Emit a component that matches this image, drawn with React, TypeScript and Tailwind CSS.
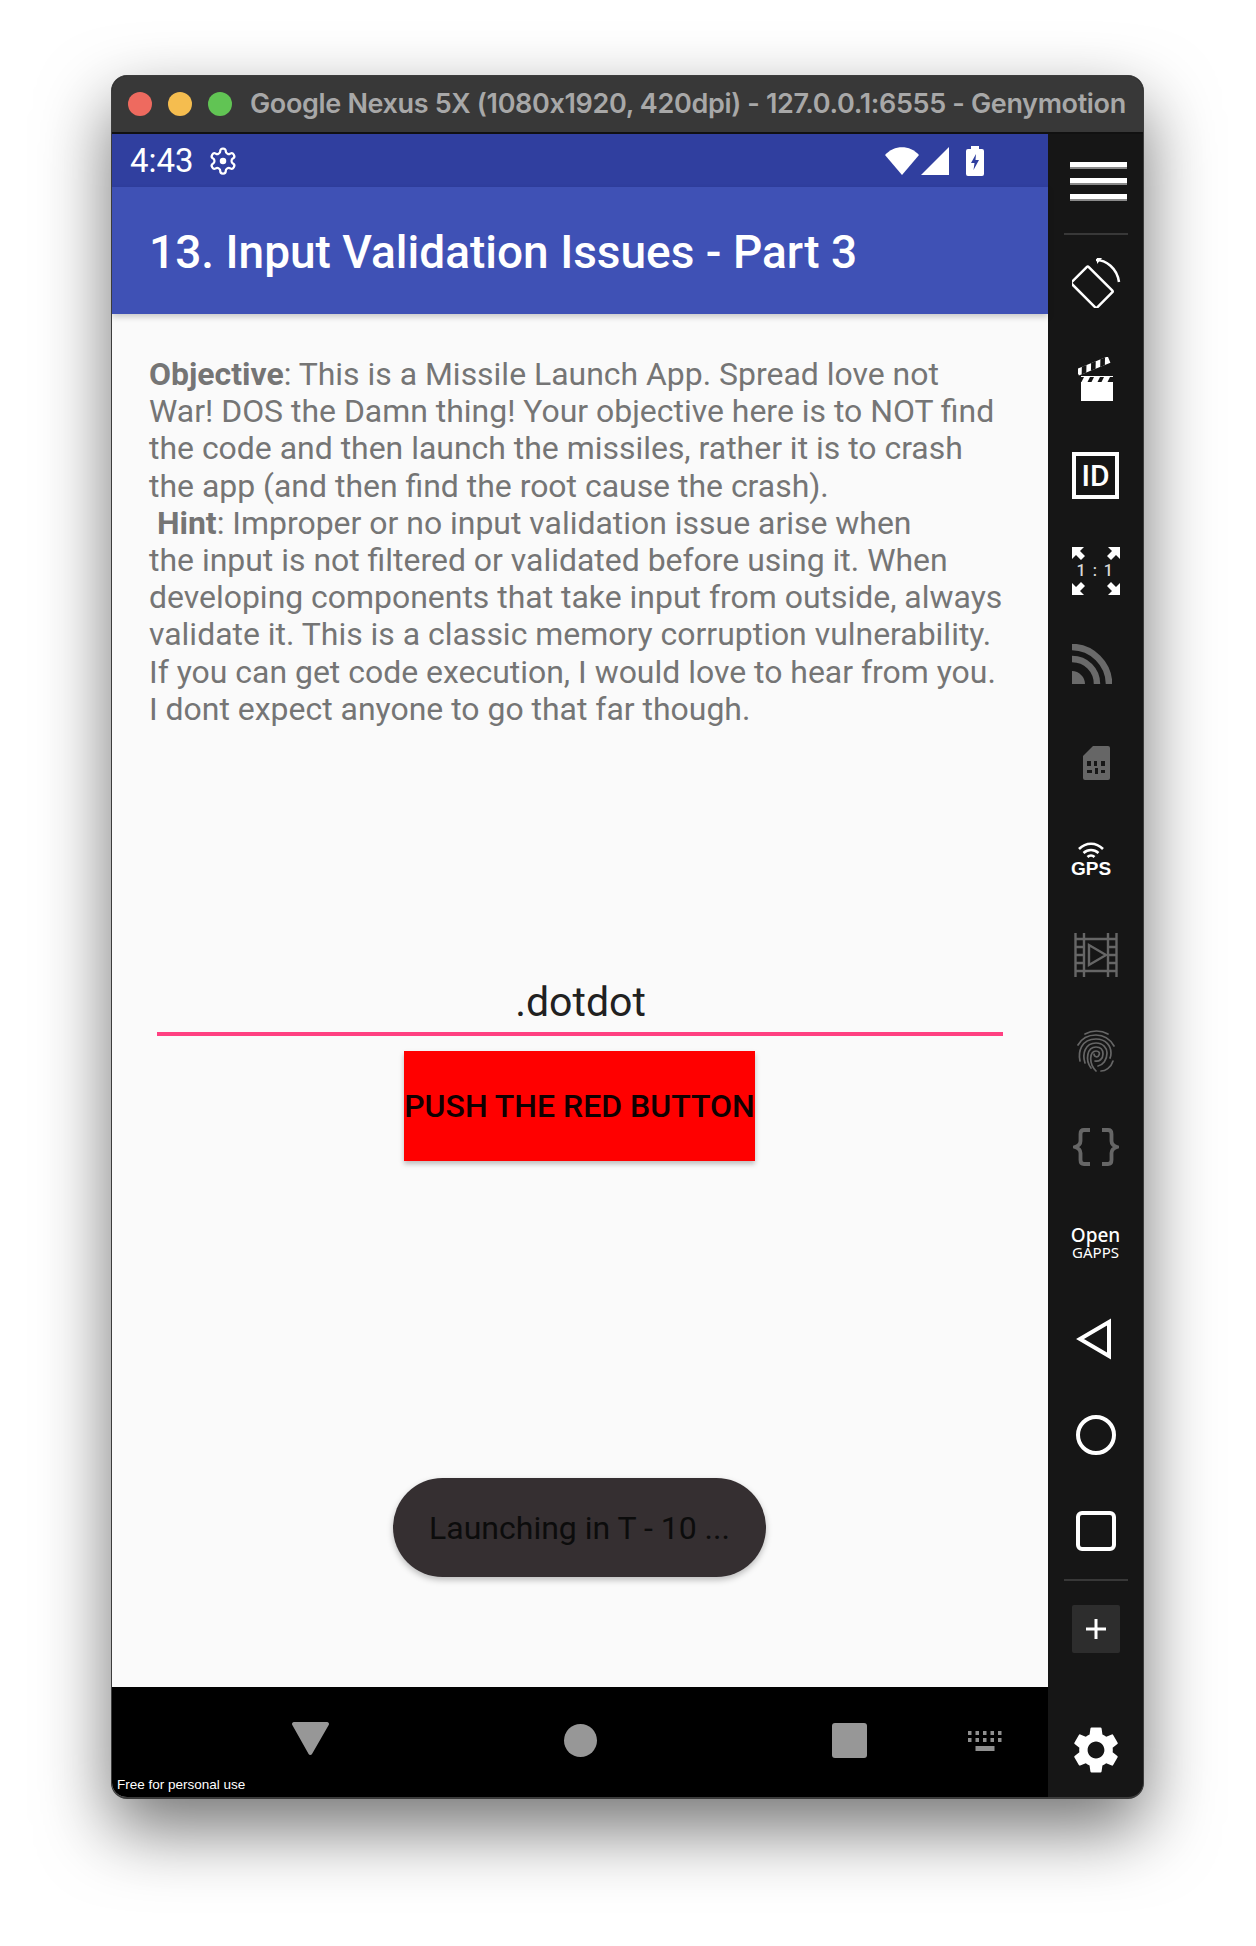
import React from "react";
import { MdSettings } from "react-icons/md";

const roboto = "font-['Roboto',sans-serif]";

function Slot({ children }: { children: React.ReactNode }) {
  return <div className="h-[96px] flex items-center justify-center shrink-0">{children}</div>;
}

function Rotate() {
  return (
    <svg width="50" height="50" viewBox="0 0 50 50" fill="none" stroke="#fff" strokeWidth="2.5" className="ml-[2px]">
      <rect x="8" y="14" width="24" height="36" rx="1.5" transform="rotate(-45 20 32) translate(2 -2)" />
      <path d="M24 2 C34 2 45 10 47 24" />
      <path d="M25 0 L30 -0 L25 6 Z" fill="#fff" stroke="none" />
    </svg>
  );
}

function Clapper() {
  return (
    <svg width="36" height="44" viewBox="0 0 36 44">
      <path d="M3 19h32v25H3z" fill="#fff" />
      <path d="M3 20h32v5H3z" fill="#161616" />
      <path d="M6 20h6l-2.5 5H3.5zM16 20h6l-2.5 5h-6zM26 20h6l-2.5 5h-6z" fill="#fff" />
      <g transform="rotate(-22 2 16)">
        <rect x="0" y="11" width="34" height="7" fill="#fff" />
        <path d="M6 11h5l-3 7H3zM16 11h5l-3 7h-5zM26 11h5l-3 7h-5z" fill="#161616" />
      </g>
    </svg>
  );
}

function IdIcon() {
  return (
    <div className={`w-[47px] h-[47px] border-[4px] border-white flex items-center justify-center text-white text-[30px] font-medium ${roboto}`}>
      ID
    </div>
  );
}

function OneToOne() {
  const arrow = "M0 0h12l-4 4 5 5-4 4-5-5-4 4z";
  return (
    <div className="relative w-[48px] h-[48px]">
      <svg width="48" height="48" viewBox="0 0 48 48" fill="#fff">
        <path d={arrow} />
        <path d={arrow} transform="translate(48 0) scale(-1 1)" />
        <path d={arrow} transform="translate(0 48) scale(1 -1)" />
        <path d={arrow} transform="translate(48 48) scale(-1 -1)" />
      </svg>
      <span className={`absolute inset-0 flex items-center justify-center text-[#d8d8d8] text-[16px] font-medium ${roboto} tracking-[1.5px] whitespace-pre`}>1 : 1</span>
    </div>
  );
}

function Rss() {
  return (
    <svg width="40" height="40" viewBox="0 0 40 40" fill="none" stroke="#6a6a6a" strokeWidth="6.5" className="mr-[8px] -mt-[6px]">
      <path d="M0 3C20 3 37 20 37 40" />
      <path d="M0 15C14 15 25 26 25 40" />
      <path d="M0 40V27C7 27 13 33 13 40Z" fill="#6a6a6a" stroke="none" />
    </svg>
  );
}

function Sim() {
  return (
    <svg width="27" height="34" viewBox="0 0 27 34" className="ml-[1px]">
      <path d="M10 0h15a2 2 0 0 1 2 2v30a2 2 0 0 1-2 2H2a2 2 0 0 1-2-2V10z" fill="#666" />
      <path d="M4 15h4v5H4zM11 15h3v5h-3zM18 15h4v5h-4zM4 24h5v3H4zM12 22h3v6h-3zM18 24h4v3h-4z" fill="#161616" />
    </svg>
  );
}

function Gps() {
  return (
    <div className="flex flex-col items-center mr-[9px]">
      <svg width="28" height="17" viewBox="0 0 28 17" fill="none" stroke="#fff" strokeWidth="2.6">
        <path d="M2 7C9 0 19 0 26 7" />
        <path d="M6.5 11C11 7 17 7 21.5 11" />
        <path d="M10.5 15C12.5 13 15.5 13 17.5 15" />
      </svg>
      <span className="text-white text-[19px] leading-[17px] font-bold font-['Liberation_Sans',sans-serif] mt-[1px]">GPS</span>
    </div>
  );
}

function Video() {
  return (
    <svg width="44" height="44" viewBox="0 0 44 44" fill="none" stroke="#666" strokeWidth="2.4">
      <path d="M1.5 0v44M10 0v44M34 0v44M42.5 0v44M1.5 6H42.5M1.5 38H42.5" />
      <path d="M1.5 14h8.5M1.5 22h8.5M1.5 30h8.5M34 14h8.5M34 22h8.5M34 30h8.5" />
      <path d="M15 12v20l17-10z" />
    </svg>
  );
}

function Finger() {
  return (
    <svg width="38" height="42" viewBox="0 0 38 42" fill="none" stroke="#666" strokeWidth="1.7" strokeLinecap="round">
      <path d="M8 4C15 0 24 0 31 4" />
      <path d="M1 15C6 6 13 5 19 5C26 5 33 9 37 16" />
      <path d="M3 31C1 22 4 9 19 9C29 9 34 16 34 23C34 25 33.5 27 33 28" />
      <path d="M8 33C5 24 8 13 19 13C26 13 30 18 30 23C30 30 26 35 21 36" />
      <path d="M14 38C8 30 10 17 19 17C24 17 26 20 26 24C26 29 22 32 18 31" />
      <path d="M19 41C11 33 13 21 19 21C22 21 23 23 22 25C21 28 17 27 17 24" />
      <path d="M24 41C28 41 34 38 36 31" />
    </svg>
  );
}

function Braces() {
  return (
    <svg width="46" height="38" viewBox="0 0 46 38" fill="none" stroke="#666" strokeWidth="3.8">
      <path d="M17 2H11C8.5 2 7.5 3.5 7.5 6V13C7.5 16 5 18 2 19C5 20 7.5 22 7.5 25V32C7.5 34.5 8.5 36 11 36H17" />
      <path d="M29 2H35C37.5 2 38.5 3.5 38.5 6V13C38.5 16 41 18 44 19C41 20 38.5 22 38.5 25V32C38.5 34.5 37.5 36 35 36H29" />
    </svg>
  );
}

function OpenGapps() {
  return (
    <div className="flex flex-col items-center text-white font-['Noto_Sans',sans-serif]">
      <span className="text-[19px] font-medium leading-[19px]">Open</span>
      <span className="text-[15px] leading-[15px]">GAPPS</span>
    </div>
  );
}

function Back() {
  return (
    <svg width="36" height="42" viewBox="0 0 36 42" fill="none" stroke="#fff" strokeWidth="4" className="-ml-[3px]">
      <path d="M33 4V38L4 21Z" />
    </svg>
  );
}

function Keyboard() {
  return (
    <svg width="36" height="20" viewBox="0 0 36 20" fill="#8f8f8f">
      {[0, 7.5, 15, 22.5, 30].map((x) => (
        <React.Fragment key={x}>
          <rect x={x} y="0" width="3.5" height="4" />
          <rect x={x} y="7" width="3.5" height="4" />
        </React.Fragment>
      ))}
      <rect x="7.5" y="15" width="19" height="5" />
    </svg>
  );
}

export default function App() {
  return (
    <div className="w-[1256px] h-[1946px] bg-white pt-[75px] pl-[111px] overflow-hidden">
      <div className="w-[1033px] h-[1724px] rounded-[16px] overflow-hidden flex flex-col bg-[#161616] shadow-[0_30px_70px_rgba(0,0,0,0.55)] border-x-[1px] border-b-[2px] border-t-[1px] border-[#3c3c3c]">
        {/* title bar */}
        <div className="h-[58px] shrink-0 bg-[#383838] border-b-[2px] border-[#111] flex items-center pl-[16px] gap-[16px]">
          <span className="w-[24px] h-[24px] rounded-full bg-[#ee6a5f]" />
          <span className="w-[24px] h-[24px] rounded-full bg-[#f5bd4f]" />
          <span className="w-[24px] h-[24px] rounded-full bg-[#61c454]" />
          <span className="ml-[2px] text-[#a8a8a8] text-[27px] font-semibold whitespace-nowrap font-['Inter',sans-serif] tracking-[-0.35px]">
            Google Nexus 5X (1080x1920, 420dpi) - 127.0.0.1:6555 - Genymotion
          </span>
        </div>

        <div className="flex-1 flex min-h-0">
          {/* device */}
          <div className="w-[936px] shrink-0 flex flex-col bg-[#fafafa] relative">
            <div className="h-[53px] shrink-0 bg-[#303f9f] flex items-center pl-[18px] text-white">
              <span className={`text-[33px] ${roboto}`}>4:43</span>
              <svg width="30" height="30" viewBox="0 0 24 24" fill="none" stroke="#fff" strokeWidth="1.8" className="ml-[14px]">
                <path d="M12.22 2h-.44a2 2 0 0 0-2 2v.18a2 2 0 0 1-1 1.73l-.43.25a2 2 0 0 1-2 0l-.15-.08a2 2 0 0 0-2.73.73l-.22.38a2 2 0 0 0 .73 2.73l.15.1a2 2 0 0 1 1 1.72v.51a2 2 0 0 1-1 1.74l-.15.09a2 2 0 0 0-.73 2.73l.22.38a2 2 0 0 0 2.73.73l.15-.08a2 2 0 0 1 2 0l.43.25a2 2 0 0 1 1 1.73V20a2 2 0 0 0 2 2h.44a2 2 0 0 0 2-2v-.18a2 2 0 0 1 1-1.73l.43-.25a2 2 0 0 1 2 0l.15.08a2 2 0 0 0 2.73-.73l.22-.39a2 2 0 0 0-.73-2.73l-.15-.08a2 2 0 0 1-1-1.74v-.5a2 2 0 0 1 1-1.74l.15-.09a2 2 0 0 0 .73-2.73l-.22-.38a2 2 0 0 0-2.73-.73l-.15.08a2 2 0 0 1-2 0l-.43-.25a2 2 0 0 1-1-1.73V4a2 2 0 0 0-2-2z" />
                <circle cx="12" cy="12" r="2.6" fill="#fff" stroke="none" />
              </svg>
              <div className="ml-auto mr-[64px] flex items-center">
                <svg width="34" height="28" viewBox="0 0 34 28" fill="#fff"><path d="M17 28L0 8C9 -2.5 25 -2.5 34 8Z" /></svg>
                <svg width="29" height="28" viewBox="0 0 29 28" fill="#fff" className="ml-[2px]"><path d="M28 0V28H0Z" /></svg>
                <svg width="18" height="30" viewBox="0 0 18 30" className="ml-[16px]">
                  <path d="M5 0h8v3h3a2 2 0 0 1 2 2v23a2 2 0 0 1-2 2H2a2 2 0 0 1-2-2V5a2 2 0 0 1 2-2h3z" fill="#fff" />
                  <path d="M10 8L5 17h3.5L7.5 24l5.5-10h-3.5z" fill="#303f9f" />
                </svg>
              </div>
            </div>
            <div className={`h-[127px] shrink-0 bg-[#3f51b5] flex items-center pl-[37px] text-white text-[46px] font-medium shadow-[0_3px_6px_rgba(0,0,0,0.2)] z-10 ${roboto}`}>
              <span className="mt-[3px] whitespace-nowrap">13. Input Validation Issues - Part 3</span>
            </div>
            <div className={`flex-1 min-h-0 flex flex-col ${roboto}`}>
              <p className="pt-[42px] pl-[37px] text-[#757575] text-[31.95px] leading-[37.2px] whitespace-nowrap">
                <b className="font-bold">Objective</b>: This is a Missile Launch App. Spread love not<br />
                War! DOS the Damn thing! Your objective here is to NOT find<br />
                the code and then launch the missiles, rather it is to crash<br />
                the app (and then find the root cause the crash).<br />
                <span className="whitespace-pre"> </span><b className="font-bold">Hint</b>: Improper or no input validation issue arise when<br />
                the input is not filtered or validated before using it. When<br />
                developing components that take input from outside, always<br />
                validate it. This is a classic memory corruption vulnerability.<br />
                If you can get code execution, I would love to hear from you.<br />
                I dont expect anyone to go that far though.
              </p>
              <div className="mt-[246px] mx-[45px] border-b-[4px] border-[#ff4081] h-[62px] flex items-center justify-center text-[#212121] text-[41px]">
                <span className="ml-[1px]">.dotdot</span>
              </div>
              <div className="mt-[15px] self-center w-[351px] h-[110px] -ml-[1px] bg-[#ff0000] shadow-[0_3px_5px_rgba(0,0,0,0.25)] flex items-center justify-center text-[#100000] text-[32px] font-medium whitespace-nowrap">
                PUSH THE RED BUTTON
              </div>
            </div>
            <div className={`absolute left-[281px] top-[1344px] w-[373px] h-[99px] rounded-full bg-[#352f31] shadow-[0_3px_6px_rgba(0,0,0,0.25)] flex items-center justify-center text-[#0c0c0c] text-[32px] ${roboto}`}>
              Launching in T - 10 ...
            </div>
            {/* nav bar */}
            <div className="h-[110px] shrink-0 bg-black relative flex items-start pt-[35px] pl-[180px]">
              <svg width="37" height="33" viewBox="0 0 37 33" fill="#979797"><path d="M2 0H35a2 2 0 0 1 1.7 3L20 32a2 2 0 0 1-3.4 0L.3 3A2 2 0 0 1 2 0Z" /></svg>
              <span className="ml-[235px] mt-[2px] w-[33px] h-[33px] rounded-full bg-[#979797]" />
              <span className="ml-[235px] mt-[1px] w-[35px] h-[35px] rounded-[3px] bg-[#979797]" />
              <span className="ml-[101px] mt-[9px]"><Keyboard /></span>
              <span className="absolute left-[5px] bottom-[5px] text-white text-[13.5px] leading-[15px] font-['Liberation_Sans',sans-serif] whitespace-nowrap">Free for personal use</span>
            </div>
          </div>

          {/* side bar */}
          <div className="flex-1 flex flex-col items-stretch">
            <div className="h-[101px] shrink-0 flex flex-col items-center pt-[28px] gap-[9px] ml-[16px] mr-[15px] border-b-[2px] border-[#383838]">
              <span className="block w-[57px] h-[7px] bg-white border-b-[2px] border-[#8a8a8a] ml-[5px]" />
              <span className="block w-[57px] h-[7px] bg-white border-b-[2px] border-[#8a8a8a] ml-[5px]" />
              <span className="block w-[57px] h-[7px] bg-white border-b-[2px] border-[#8a8a8a] ml-[5px]" />
            </div>
            <div>
              <Slot><Rotate /></Slot>
              <Slot><Clapper /></Slot>
              <Slot><IdIcon /></Slot>
              <Slot><OneToOne /></Slot>
              <Slot><Rss /></Slot>
              <Slot><Sim /></Slot>
              <Slot><Gps /></Slot>
              <Slot><Video /></Slot>
              <Slot><Finger /></Slot>
              <Slot><Braces /></Slot>
              <Slot><OpenGapps /></Slot>
              <Slot><Back /></Slot>
              <Slot><span className="block w-[40px] h-[40px] rounded-full border-[4px] border-white" /></Slot>
              <Slot><span className="block w-[40px] h-[40px] rounded-[6px] border-[4px] border-white" /></Slot>
            </div>
            <div className="ml-[16px] mr-[15px] border-t-[2px] border-[#383838] pt-[24px] flex justify-center">
              <span className="w-[48px] h-[48px] bg-[#2d2d2d] rounded-[2px] flex items-center justify-center">
                <svg width="20" height="20" viewBox="0 0 20 20" fill="#fff"><path d="M8.5 0h3v8.5H20v3h-8.5V20h-3v-8.5H0v-3h8.5z" /></svg>
              </span>
            </div>
            <div className="flex justify-center mt-[69px]">
              <MdSettings size={56} color="#fff" />
            </div>
          </div>
        </div>
      </div>
    </div>
  );
}
